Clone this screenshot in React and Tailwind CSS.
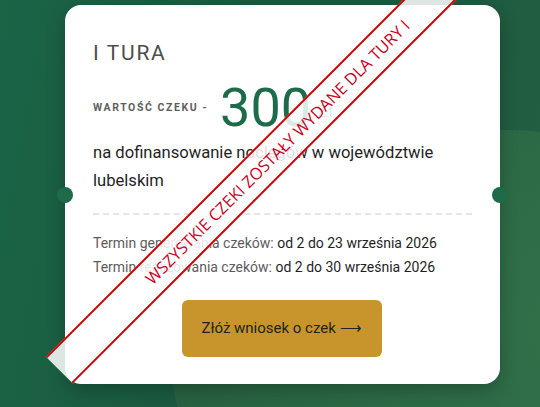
export default function App() {
  return (
    <div
      className="relative h-[407px] w-[540px] overflow-hidden bg-[#1c5b40]"
      style={{ fontFamily: "Roboto, 'Noto Sans', sans-serif" }}
    >
      {/* soft background glow */}
      <div className="absolute inset-0 bg-[linear-gradient(100deg,#1b6446_0%,#1a5a3f_45%,#1c5b40_70%,#245f42_100%)]" />
      <div className="absolute left-[170px] top-[130px] h-[440px] w-[560px] rounded-full bg-[radial-gradient(circle_at_70%_45%,#32724a_0%,#2c6a45_50%,#285f40_100%)] opacity-90" />

      <div className="relative flex pl-[65px] pt-[5px]">
        <div className="relative w-[435px] rounded-[16px] bg-white px-[28px] pt-[35px] pb-[27px] shadow-[0_6px_18px_rgba(0,0,0,0.25)]">
          {/* ticket notches */}
          <span className="absolute left-[-8px] top-[182px] h-[16px] w-[16px] rounded-full bg-[#1e6a49]" />
          <span className="absolute right-[-8px] top-[182px] h-[16px] w-[16px] rounded-full bg-[#1e6a49]" />

          <h2 className="text-[21px] font-normal leading-[26px] tracking-[0.08em] text-[#4d4d4d]">I TURA</h2>

          <div className="mt-[14px] flex items-end">
            <span className="mb-[20px] text-[10.5px] font-bold tracking-[0.15em] text-[#5e5e5e]">WARTOŚĆ CZEKU -</span>
            <span className="ml-[12px] text-[54px] font-normal leading-[56px] text-[#1e6b49]">300</span>
            <span className="mb-[10px] ml-[6px] text-[22px] font-light text-[#1e6b49]">zł</span>
          </div>

          <p className="mt-[3px] text-[16.6px] leading-[28px] text-[#1f1f1f]">
            na dofinansowanie noclegów w województwie lubelskim
          </p>

          <div className="mt-[18px] border-t-2 border-dashed border-[#e6e6e6]" />

          <div className="mt-[16px] text-[14px] leading-[24px]">
            <p>
              <span className="text-[#5c5c5c]">Termin generowania czeków:</span>{" "}
              <span className="text-[#1f1f1f]">od 2 do 23 września 2026</span>
            </p>
            <p>
              <span className="text-[#5c5c5c]">Termin realizowania czeków:</span>{" "}
              <span className="text-[#1f1f1f]">od 2 do 30 września 2026</span>
            </p>
          </div>

          <div className="mt-[21px] flex justify-center pr-[2px]">
            <button className="h-[57px] w-[200px] rounded-[6px] bg-[#c8952c] text-[15px] text-[#222]">
              Złóż wniosek o czek ⟶
            </button>
          </div>

          {/* sold-out ribbon */}
          <div
            className="pointer-events-none absolute left-[-96px] top-[128px] flex h-[38px] w-[617px] rotate-[-45deg] items-center justify-center border-y-2 border-[#cc0000] bg-white/85 text-[16.4px] font-medium text-[#c8001e]"
            style={{ fontFamily: "'Open Sans', sans-serif" }}
          >
            WSZYSTKIE CZEKI ZOSTAŁY WYDANE DLA TURY I
          </div>
        </div>
      </div>
    </div>
  );
}
